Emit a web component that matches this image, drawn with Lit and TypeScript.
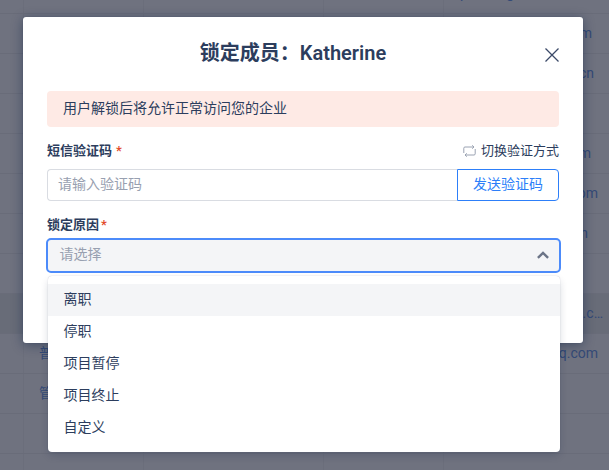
import { LitElement, html, css } from "lit";
import { customElement, property, state } from "lit/decorators.js";
import { classMap } from "lit/directives/class-map.js";

interface Row {
  role?: string;
  mail?: string;
  end?: number;
  active?: boolean;
}

const ROWS: Row[] = [
  { mail: "p           g", end: 95 },
  { mail: "m", end: 17 },
  { mail: "cn", end: 15 },
  {},
  { mail: "m", end: 18 },
  { mail: "om", end: 11 },
  { mail: "n", end: 21 },
  {},
  { mail: ".c…", end: 6, active: true },
  { role: "普", mail: "q.com", end: 11 },
  { role: "管" },
  {},
  {},
];

@customElement("member-table")
class MemberTable extends LitElement {
  static styles = css`
    :host {
      display: block;
      margin-top: -26px;
      color: #344a77;
      font-size: 14px;
    }
    .row {
      display: grid;
      grid-template-columns: 24px 120px 180px 120px 1fr;
      height: 40px;
      line-height: 39px;
      box-sizing: border-box;
      border-bottom: 1px solid #696c79;
    }
    .row.active {
      background: #686c78;
    }
    .cell {
      box-sizing: border-box;
      border-right: 1px solid #6b6e7b;
      white-space: pre;
    }
    .cell:last-child {
      border-right: 0;
      text-align: right;
    }
    .role {
      padding-left: 15px;
    }
  `;

  render() {
    return ROWS.map(
      (r) => html`<div class=${classMap({ row: true, active: !!r.active })}>
        <div class="cell"></div>
        <div class="cell role">${r.role ?? ""}</div>
        <div class="cell"></div>
        <div class="cell"></div>
        <div class="cell" style="padding-right:${r.end ?? 0}px">${r.mail ?? ""}</div>
      </div>`
    );
  }
}

@customElement("reason-select")
class ReasonSelect extends LitElement {
  @property({ type: Array }) options: string[] = [];
  @state() private active = 0;

  static styles = css`
    :host {
      display: block;
      position: relative;
      margin: 0 -2px 0 -1px;
    }
    .field {
      box-sizing: border-box;
      height: 35px;
      padding: 0 10px 3px 11.5px;
      display: flex;
      align-items: center;
      justify-content: space-between;
      border: 2px solid #4c8bfa;
      border-radius: 5px;
      background: #f4f5f7;
      color: #98a0b0;
    }
    .arrow {
      margin-top: 2px;
    }
    .menu {
      position: absolute;
      top: 38px;
      left: 2px;
      right: 1px;
      box-sizing: border-box;
      height: 176px;
      padding-top: 8px;
      border-radius: 4px;
      background: #fff;
      box-shadow: 0 0 1px rgba(9, 30, 66, 0.28), 0 4px 8px -1px rgba(9, 30, 66, 0.2);
    }
    .option {
      height: 32px;
      line-height: 31px;
      padding-left: 15.5px;
    }
    .option.active {
      background: #f4f5f7;
    }
  `;

  render() {
    return html`
      <div class="field">
        <span>请选择</span>
        <svg class="arrow" width="12" height="8" viewBox="0 0 12 8" fill="none" stroke="#6b7487" stroke-width="2.4">
          <path d="M0.9 6.9 6 1.9 11.1 6.9" />
        </svg>
      </div>
      <div class="menu">
        ${this.options.map(
          (o, i) => html`<div
            class=${classMap({ option: true, active: i === this.active })}
            @mouseenter=${() => (this.active = i)}
          >${o}</div>`
        )}
      </div>
    `;
  }
}

@customElement("app-root")
class AppRoot extends LitElement {
  static styles = css`
    :host {
      display: block;
      position: relative;
      height: 470px;
      overflow: hidden;
      background: #6f727f;
      color: #2c3d5d;
      font: 14px/20px Roboto, "Noto Sans CJK SC", sans-serif;
    }
    .dialog {
      position: absolute;
      left: 23px;
      top: 17px;
      width: 560px;
      height: 326px;
      box-sizing: border-box;
      padding: 22px 24px 0;
      border-radius: 3px;
      background: #fff;
      box-shadow: 0 0 1px rgba(9, 30, 66, 0.3), 0 2px 12px rgba(9, 30, 66, 0.45);
    }
    .header {
      position: relative;
      height: 52px;
    }
    .title {
      margin: 0;
      padding-right: 20px;
      text-align: center;
      font-size: 20px;
      line-height: 29px;
      font-weight: 600;
      white-space: pre;
    }
    .close {
      position: absolute;
      right: 0;
      top: 9px;
    }
    .notice {
      height: 36px;
      line-height: 34px;
      padding-left: 16px;
      border-radius: 4px;
      background: #feeae5;
    }
    .bar {
      display: flex;
      justify-content: space-between;
      align-items: center;
      font-size: 13px;
      height: 20px;
      margin-top: 14px;
    }
    .label {
      font-weight: 600;
    }
    .star {
      color: #e2492a;
      margin-left: 4px;
    }
    .star.near {
      margin-left: 2px;
    }
    .switch {
      display: flex;
      align-items: center;
      gap: 5px;
    }
    .code {
      display: flex;
      height: 32px;
      margin-top: 8px;
      line-height: 28px;
    }
    .input {
      flex: 1;
      box-sizing: border-box;
      padding-left: 10px;
      border: 1px solid #d9dce2;
      border-right: 0;
      border-radius: 4px 0 0 4px;
      color: #98a0b0;
    }
    .send {
      width: 102px;
      box-sizing: border-box;
      text-align: center;
      border: 1px solid #2d7ff9;
      border-radius: 0 4px 4px 0;
      color: #2d7ff9;
    }
    reason-select {
      margin-top: 3px;
    }
  `;

  render() {
    return html`
      <member-table></member-table>
      <div class="dialog">
        <div class="header">
          <h2 class="title">锁定成员：Katherine</h2>
          <svg class="close" width="14" height="14" viewBox="0 0 14 14" stroke="#3b4a68" stroke-width="1.3">
            <path d="M.5.5 13.5 13.5M13.5.5.5 13.5" />
          </svg>
        </div>
        <div class="notice">用户解锁后将允许正常访问您的企业</div>
        <div class="bar">
          <span class="label">短信验证码<span class="star">*</span></span>
          <span class="switch">
            <svg width="13" height="12" viewBox="0 0 13 12" fill="none" stroke="#9aa2b2">
              <path d="M.8 8V3.2Q.8 2 2 2H11M9.2.3 11 2 9.2 3.7M12.2 4V8.8Q12.2 10 11 10H2M3.8 8.3 2 10 3.8 11.7" />
            </svg>
            切换验证方式
          </span>
        </div>
        <div class="code">
          <div class="input">请输入验证码</div>
          <div class="send">发送验证码</div>
        </div>
        <div class="bar">
          <span class="label">锁定原因<span class="star near">*</span></span>
        </div>
        <reason-select .options=${["离职", "停职", "项目暂停", "项目终止", "自定义"]}></reason-select>
      </div>
    `;
  }
}
